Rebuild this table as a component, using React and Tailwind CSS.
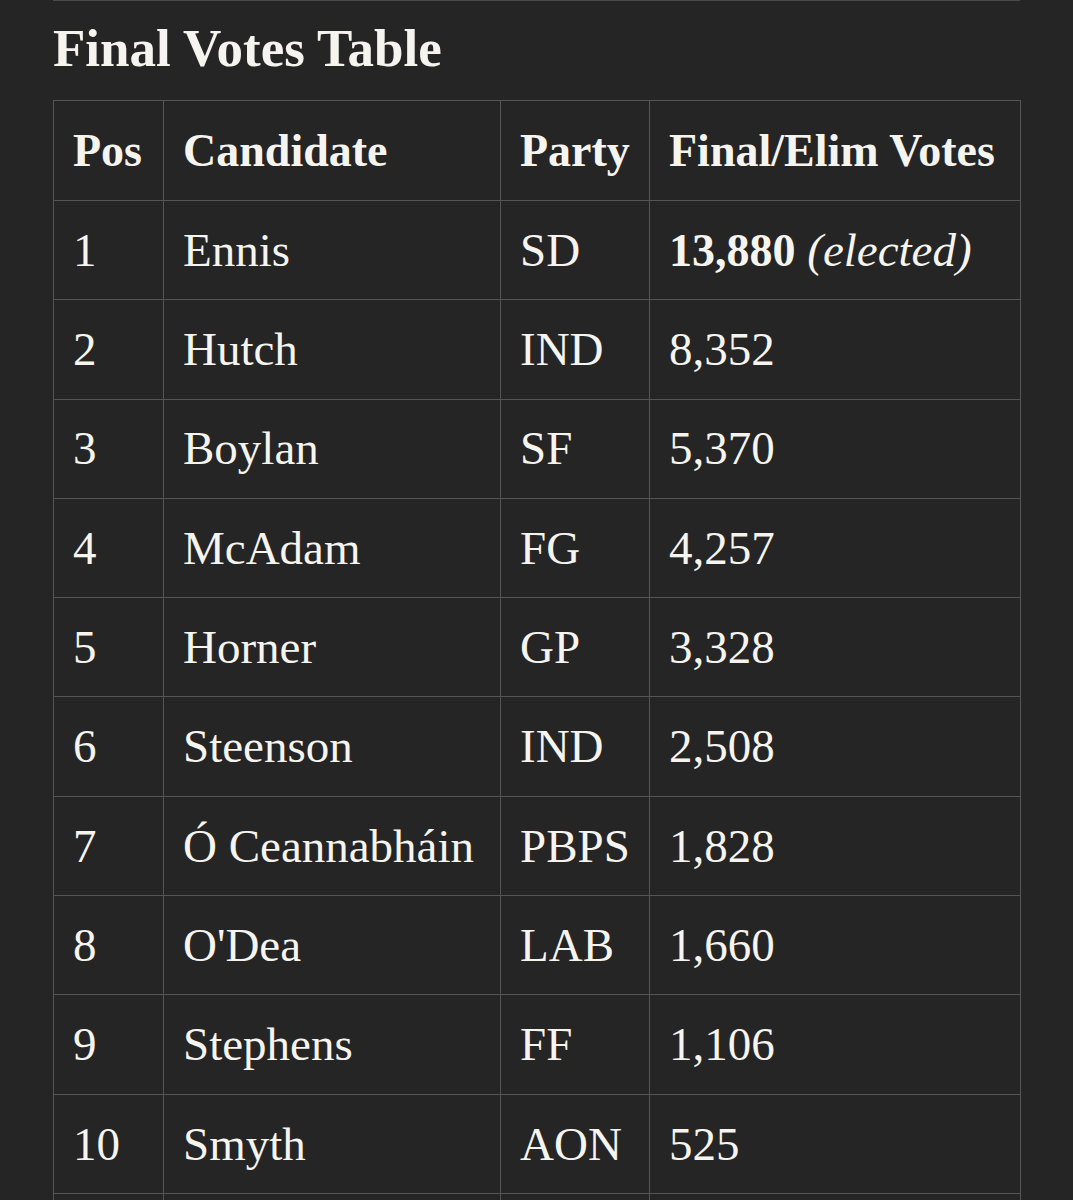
import React from 'react'

const rows = [
  { pos: 1, name: 'Ennis', party: 'SD', votes: '13,880', elected: true },
  { pos: 2, name: 'Hutch', party: 'IND', votes: '8,352' },
  { pos: 3, name: 'Boylan', party: 'SF', votes: '5,370' },
  { pos: 4, name: 'McAdam', party: 'FG', votes: '4,257' },
  { pos: 5, name: 'Horner', party: 'GP', votes: '3,328' },
  { pos: 6, name: 'Steenson', party: 'IND', votes: '2,508' },
  { pos: 7, name: 'Ó Ceannabháin', party: 'PBPS', votes: '1,828' },
  { pos: 8, name: "O'Dea", party: 'LAB', votes: '1,660' },
  { pos: 9, name: 'Stephens', party: 'FF', votes: '1,106' },
  { pos: 10, name: 'Smyth', party: 'AON', votes: '525' }
]

function App () {
  return (
    <div className="h-[1200px] bg-[#252525] text-[#f6f4ef] font-['Liberation_Serif',serif] overflow-hidden">
      <div className="ml-[53px] w-[967px] border-t border-[#4a4a4a]">
        {/* title */}
        <h1 className="pt-[21px] text-[53px] font-bold leading-none">Final Votes Table</h1>

        <table className="mt-[25px] w-[967px] table-fixed border-collapse">
          <colgroup>
            <col className="w-[110px]" />
            <col className="w-[337px]" />
            <col className="w-[149px]" />
            <col className="w-[371px]" />
          </colgroup>
          <thead>
            <tr className="h-[100px] text-[46px] font-bold">
              <th className="border border-[#555] pl-[19px] text-left align-middle">Pos</th>
              <th className="border border-[#555] pl-[19px] text-left align-middle">Candidate</th>
              <th className="border border-[#555] pl-[19px] text-left align-middle">Party</th>
              <th className="border border-[#555] pl-[19px] text-left align-middle whitespace-nowrap">Final/Elim Votes</th>
            </tr>
          </thead>
          <tbody>
            {rows.map(r => (
              <tr key={r.pos} className="h-[99.3px] text-[47px]">
                <td className="border border-[#555] pl-[19px] align-middle">{r.pos}</td>
                <td className="border border-[#555] pl-[19px] align-middle whitespace-nowrap">{r.name}</td>
                <td className="border border-[#555] pl-[19px] align-middle">{r.party}</td>
                <td className="border border-[#555] pl-[19px] align-middle whitespace-nowrap">
                  {r.elected
                    ? (<><span className="font-bold text-[46px]">{r.votes}</span> <span className="italic">(elected)</span></>)
                    : r.votes}
                </td>
              </tr>
            ))}
            {/* next row, cut off by the frame */}
            <tr className="h-[99.3px]">
              <td className="border border-[#555]" />
              <td className="border border-[#555]" />
              <td className="border border-[#555]" />
              <td className="border border-[#555]" />
            </tr>
          </tbody>
        </table>
      </div>
    </div>
  )
}

export default App
